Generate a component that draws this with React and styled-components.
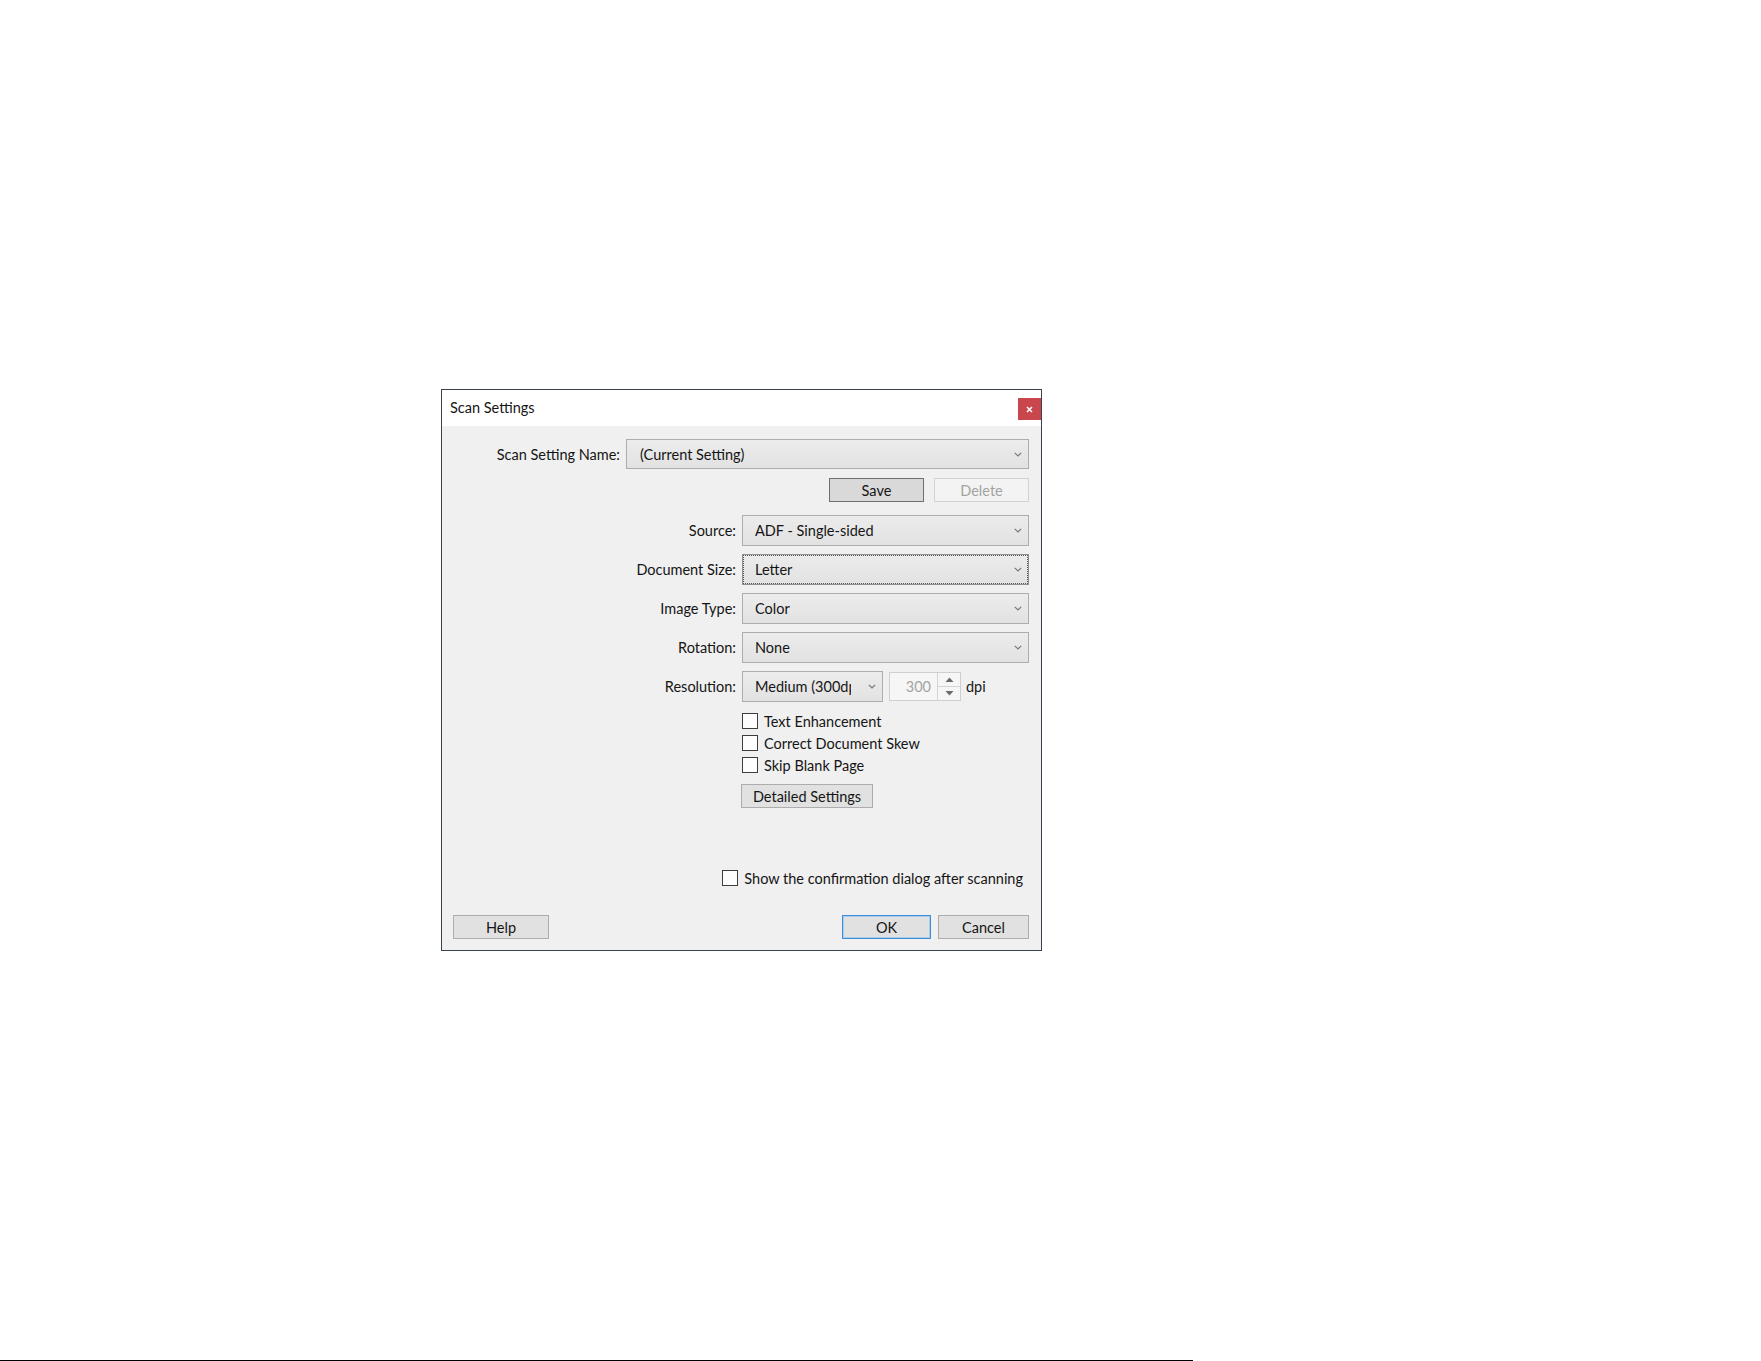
import React from "react";
import styled, { createGlobalStyle, css } from "styled-components";

const Global = createGlobalStyle`
  html, body { margin: 0; padding: 0; background: #ffffff; }
  body { font-family: Lato, "Noto Sans", "DejaVu Sans", sans-serif; }
`;

const Page = styled.div`
  min-height: 1361px;
  box-sizing: border-box;
  padding-top: 389px;
  display: flex;
  flex-direction: column;
`;

const Dialog = styled.div`
  margin-left: 441px;
  width: 601px;
  box-sizing: border-box;
  border: 1px solid #3a4250;
  background: #f0f0f0;
  font-size: 14.5px;
  color: #151515;
`;

const TitleBar = styled.div`
  height: 36px;
  background: #ffffff;
  display: flex;
  justify-content: space-between;
  align-items: flex-start;
  padding-left: 8px;
`;

const Title = styled.span`
  line-height: 36px;
`;

const CloseButton = styled.div`
  margin-top: 8px;
  width: 23px;
  height: 22px;
  background: #c9474c;
  display: flex;
  align-items: center;
  justify-content: center;
`;

const Body = styled.div`
  padding: 13px 12px 11px 11px;
`;

const RowEnd = styled.div`
  display: flex;
  justify-content: flex-end;
  align-items: center;
  gap: ${(p) => p.$gap || 0}px;
  margin-top: ${(p) => p.$top || 0}px;
  padding-right: ${(p) => p.$right || 0}px;
`;

const Label = styled.span`
  white-space: nowrap;
  text-align: right;
`;

const ComboBox = styled.div`
  box-sizing: border-box;
  width: ${(p) => p.$w}px;
  height: ${(p) => p.$h || 31}px;
  border: 1px solid #adadad;
  background: linear-gradient(#ececec, #e2e2e2);
  display: flex;
  align-items: center;
  padding-left: ${(p) => p.$pad || 12}px;
  white-space: nowrap;
  overflow: hidden;
  ${(p) =>
    p.$focus &&
    css`
      border-color: #8f8f8f;
      outline: 1px dotted #555;
      outline-offset: -2px;
    `}
`;

const ComboText = styled.span`
  flex: 1;
  overflow: hidden;
  ${(p) =>
    p.$clip &&
    css`
      flex: none;
      width: ${p.$clip}px;
      margin-right: auto;
    `}
`;

const Chevron = styled.svg`
  flex: none;
  width: 8px;
  height: 5px;
  margin: 0 6px;
`;

const Button = styled.div`
  box-sizing: border-box;
  width: ${(p) => p.$w}px;
  height: 24px;
  border: 1px solid #adadad;
  background: #e1e1e1;
  display: flex;
  align-items: center;
  justify-content: center;
  white-space: nowrap;
  ${(p) =>
    p.$pressed &&
    css`
      border-color: #6f6f6f;
      background: #d9d9d9;
    `}
  ${(p) =>
    p.$disabled &&
    css`
      border-color: #d3d3d3;
      background: #f3f3f3;
      color: #a3a3a3;
    `}
  ${(p) =>
    p.$default &&
    css`
      border-color: #3f8fd6;
      box-shadow: inset 0 0 0 1px #a9cdee;
    `}
`;

const FormGrid = styled.div`
  margin-top: 13px;
  display: grid;
  grid-template-columns: 1fr 287px;
  grid-auto-rows: 31px;
  column-gap: 6px;
  row-gap: 8px;
  align-items: center;
`;

const ResolutionControls = styled.div`
  display: flex;
  align-items: center;
  gap: 6px;
`;

const SpinBox = styled.div`
  box-sizing: border-box;
  width: 72px;
  height: 29px;
  border: 1px solid #cfcfcf;
  background: #f6f6f6;
  display: flex;
`;

const SpinValue = styled.span`
  flex: 1;
  text-align: right;
  padding-right: 6px;
  line-height: 27px;
  color: #a4a4a4;
`;

const SpinArrows = styled.div`
  width: 22px;
  border-left: 1px solid #d4d4d4;
  display: flex;
  flex-direction: column;
`;

const SpinArrow = styled.div`
  flex: 1;
  display: flex;
  align-items: center;
  justify-content: center;
  & + & {
    border-top: 1px solid #d4d4d4;
  }
`;

const Unit = styled.span`
  margin-left: -1px;
`;

const Options = styled.div`
  margin-top: 8px;
  margin-left: auto;
  width: 287px;
  display: flex;
  flex-direction: column;
`;

const CheckRow = styled.label`
  display: flex;
  align-items: center;
  gap: 6px;
  height: ${(p) => p.$h || 22}px;
  white-space: nowrap;
`;

const Box = styled.span`
  box-sizing: border-box;
  width: 16px;
  height: 16px;
  border: 1px solid #3d3d3d;
  background: #fdfdfd;
  flex: none;
`;

const DetailButton = styled(Button)`
  margin-top: 8px;
  margin-left: -1px;
`;

const Footer = styled.div`
  margin-top: 27px;
  display: flex;
  align-items: center;
  gap: 7px;
`;

const Spacer = styled.div`
  flex: 1;
`;

const BottomRule = styled.div`
  margin-top: auto;
  width: 1193px;
  height: 1px;
  background: #000000;
`;

const ChevronIcon = () => (
  <Chevron viewBox="0 0 8 5">
    <path d="M0.8 0.8 L4 4 L7.2 0.8" fill="none" stroke="#777" strokeWidth="1.2" />
  </Chevron>
);

const Combo = ({ w, h, pad, focus, clip, children }) => (
  <ComboBox $w={w} $h={h} $pad={pad} $focus={focus}>
    <ComboText $clip={clip}>{children}</ComboText>
    <ChevronIcon />
  </ComboBox>
);

const Check = ({ children, h }) => (
  <CheckRow $h={h}>
    <Box />
    <span>{children}</span>
  </CheckRow>
);

const fields = [
  { label: "Source:", value: "ADF - Single-sided" },
  { label: "Document Size:", value: "Letter", focus: true },
  { label: "Image Type:", value: "Color" },
  { label: "Rotation:", value: "None" },
];

export default function App() {
  return (
    <>
      <Global />
      <Page>
        <Dialog>
          <TitleBar>
            <Title>Scan Settings</Title>
            <CloseButton>
              <svg width="7" height="7" viewBox="0 0 7 7">
                <path d="M1 1 L6 6 M6 1 L1 6" stroke="#fff" strokeWidth="1.5" />
              </svg>
            </CloseButton>
          </TitleBar>
          <Body>
            <RowEnd $gap={6}>
              <Label>Scan Setting Name:</Label>
              <Combo w={403} h={30} pad={13}>
                (Current Setting)
              </Combo>
            </RowEnd>
            <RowEnd $gap={10} $top={9}>
              <Button $w={95} $pressed>
                Save
              </Button>
              <Button $w={95} $disabled>
                Delete
              </Button>
            </RowEnd>
            <FormGrid>
              {fields.map((f) => (
                <React.Fragment key={f.label}>
                  <Label>{f.label}</Label>
                  <Combo w={287} focus={f.focus}>
                    {f.value}
                  </Combo>
                </React.Fragment>
              ))}
              <Label>Resolution:</Label>
              <ResolutionControls>
                <Combo w={141} clip={96}>
                  Medium (300dpi)
                </Combo>
                <SpinBox>
                  <SpinValue>300</SpinValue>
                  <SpinArrows>
                    <SpinArrow>
                      <svg width="9" height="5" viewBox="0 0 9 5">
                        <path d="M0.5 5 L4.5 0.5 L8.5 5 Z" fill="#6a6a6a" />
                      </svg>
                    </SpinArrow>
                    <SpinArrow>
                      <svg width="9" height="5" viewBox="0 0 9 5">
                        <path d="M0.5 0 L4.5 4.5 L8.5 0 Z" fill="#6a6a6a" />
                      </svg>
                    </SpinArrow>
                  </SpinArrows>
                </SpinBox>
                <Unit>dpi</Unit>
              </ResolutionControls>
            </FormGrid>
            <Options>
              <Check>Text Enhancement</Check>
              <Check>Correct Document Skew</Check>
              <Check>Skip Blank Page</Check>
              <DetailButton $w={132}>Detailed Settings</DetailButton>
            </Options>
            <RowEnd $top={60} $right={6}>
              <Check h={20}>Show the confirmation dialog after scanning</Check>
            </RowEnd>
            <Footer>
              <Button $w={96}>Help</Button>
              <Spacer />
              <Button $w={89} $default>
                OK
              </Button>
              <Button $w={91}>Cancel</Button>
            </Footer>
          </Body>
        </Dialog>
        <BottomRule />
      </Page>
    </>
  );
}
